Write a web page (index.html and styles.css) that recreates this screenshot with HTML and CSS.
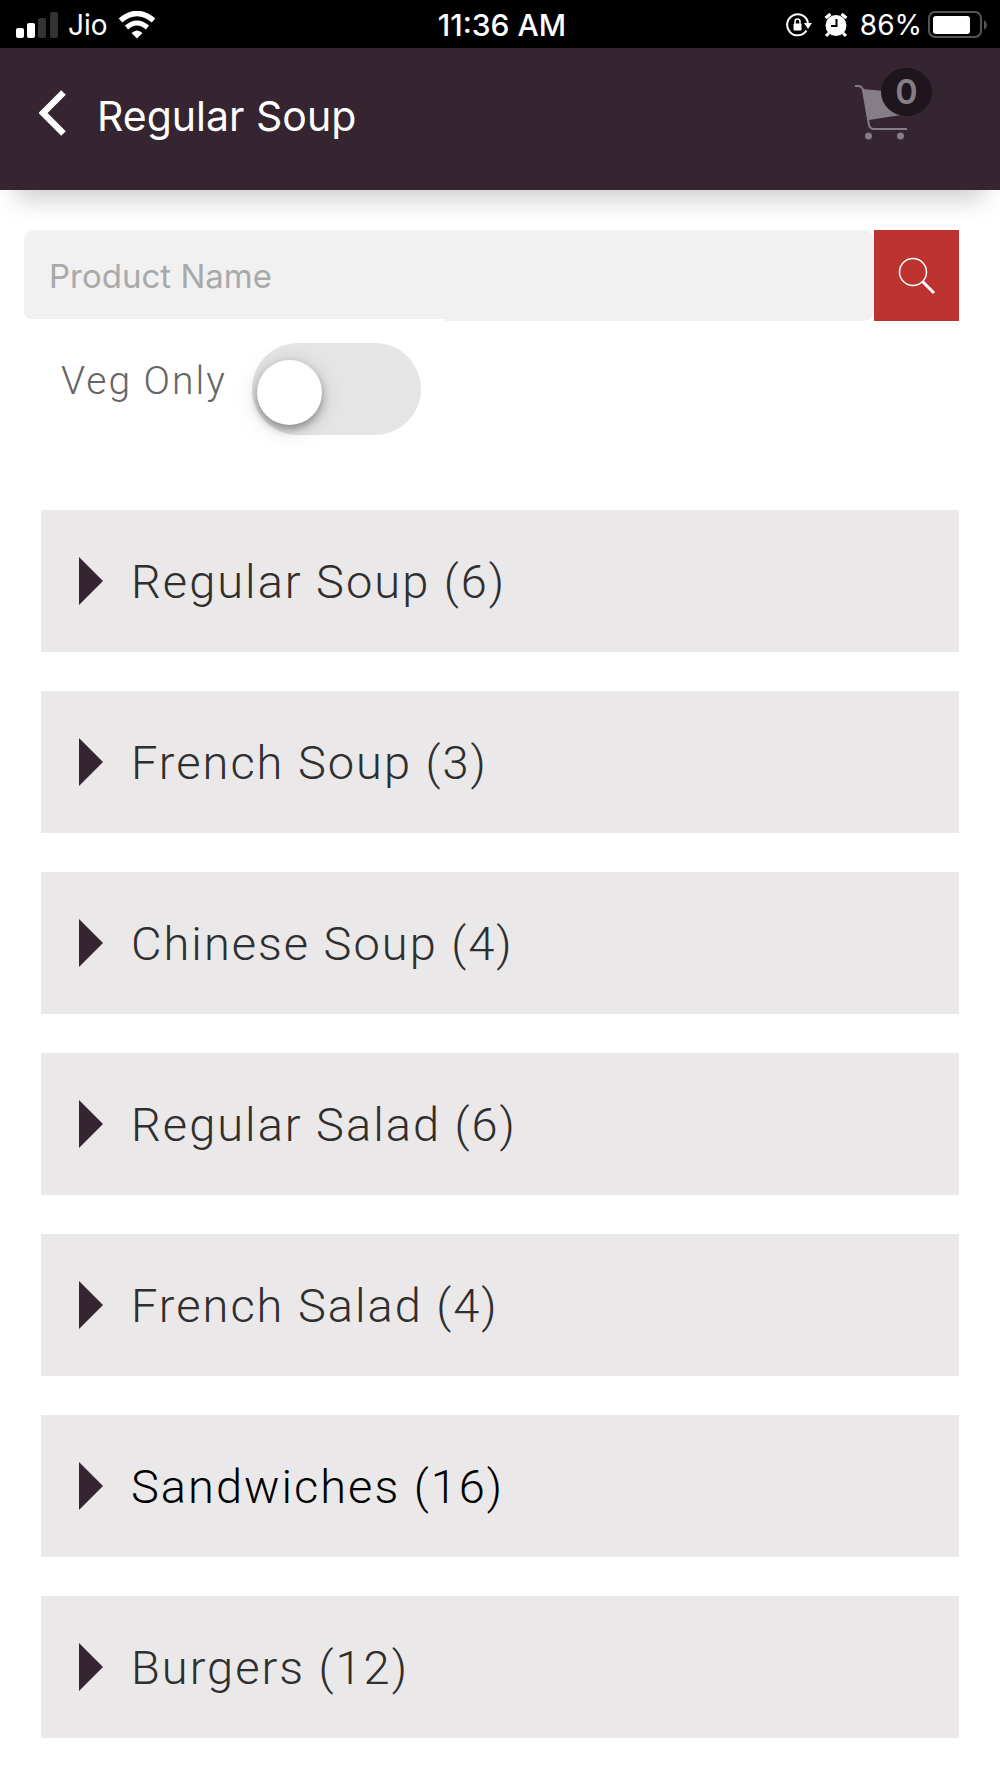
FILE: index.html
```html
<!DOCTYPE html>
<html lang="en">
<head>
<meta charset="utf-8">
<meta name="viewport" content="width=device-width, initial-scale=1">
<title>Regular Soup</title>
<link rel="stylesheet" href="styles.css">
</head>
<body>
<div class="status">
  <div class="status-side">
    <svg class="signal" width="42" height="28" viewBox="0 0 42 28" aria-hidden="true">
      <rect x="0" y="17" width="8" height="10" rx="2" fill="#fff"/>
      <rect x="11" y="12" width="8" height="15" rx="2" fill="#fff"/>
      <rect x="22" y="7" width="8" height="20" rx="2" fill="#333"/>
      <rect x="34" y="1" width="8" height="26" rx="2" fill="#333"/>
    </svg>
    <span class="carrier">Jio</span>
    <svg width="38" height="28" viewBox="0 0 38 28" aria-hidden="true">
      <path d="M2.500 9.500Q19-4.500 35.500 9.500" fill="none" stroke="#fff" stroke-width="5.500"/>
      <path d="M8.500 16.500Q19 7.500 29.500 16.500" fill="none" stroke="#fff" stroke-width="5"/>
      <path d="M13.500 22Q19 17 24.500 22L19 27.500Z" fill="#fff"/>
    </svg>
  </div>
  <span class="clock">11:36 AM</span>
  <div class="status-side status-right">
    <svg width="26" height="26" viewBox="0 0 26 26" aria-hidden="true">
      <path d="M20.500 18.500A10.500 10.500 0 1 1 22 11" fill="none" stroke="#fff" stroke-width="2"/>
      <path d="M18 11h8l-4 6z" fill="#fff"/>
      <rect x="7.500" y="11.500" width="8" height="7" rx="1" fill="#fff"/>
      <path d="M9 12V9.500a2.500 2.500 0 0 1 5 0V12" fill="none" stroke="#fff" stroke-width="1.500"/>
    </svg>
    <svg class="alarm" width="24" height="26" viewBox="0 0 24 26" aria-hidden="true">
      <path d="M1.500 6L6.500 2M17.500 2l5 4M5 21l-3 3M19 21l3 3" stroke="#fff" stroke-width="3"/>
      <circle cx="12" cy="13.500" r="10.500" fill="#fff"/>
      <path d="M12.500 7v7H7" fill="none" stroke="#000" stroke-width="2"/>
    </svg>
    <span class="percent">86%</span>
    <svg width="60" height="28" viewBox="0 0 60 28" aria-hidden="true">
      <rect x="1" y="1" width="52" height="25" rx="6" fill="none" stroke="#555" stroke-width="2"/>
      <rect x="5" y="5" width="37" height="18" rx="3" fill="#fff"/>
      <path d="M56 9q3 2 3 5t-3 5z" fill="#555"/>
    </svg>
  </div>
</div>

<header class="appbar">
  <button class="back" type="button" aria-label="Back">
    <svg width="28" height="46" viewBox="0 0 28 46"><path d="M24.500 2.500L4 23l20.500 20.500" fill="none" stroke="#fff" stroke-width="6.500"/></svg>
  </button>
  <h1 class="title">Regular Soup</h1>
  <button class="cart" type="button" aria-label="Cart">
    <svg width="54" height="56" viewBox="0 0 54 56">
      <path d="M0 2h3q4 0 5 4l6 35q1 4 5 4h33" fill="none" stroke="#867e86" stroke-width="2"/>
      <path d="M7 5l45 4-6 22-32 5z" fill="#867e86"/>
      <circle cx="13.500" cy="52" r="3.500" fill="#867e86"/>
      <circle cx="45.500" cy="52" r="3.500" fill="#867e86"/>
    </svg>
    <span class="badge">0</span>
  </button>
</header>

<main class="page">
  <form class="search">
    <input class="search-input" type="text" placeholder="Product Name" aria-label="Product Name">
    <button class="search-button" type="submit" aria-label="Search">
      <svg width="38" height="38" viewBox="0 0 38 38"><circle cx="15" cy="15" r="13.500" fill="none" stroke="#fff" stroke-width="1.500"/><path d="M24.500 24.500L36 36" stroke="#fff" stroke-width="3"/></svg>
    </button>
  </form>
  <div class="filter">
    <label class="filter-label" for="veg">Veg Only</label>
    <input class="toggle" type="checkbox" role="switch" id="veg">
  </div>
  <div class="menu">
    <details class="category"><summary class="category-head">Regular Soup (6)</summary></details>
    <details class="category"><summary class="category-head">French Soup (3)</summary></details>
    <details class="category"><summary class="category-head">Chinese Soup (4)</summary></details>
    <details class="category"><summary class="category-head">Regular Salad (6)</summary></details>
    <details class="category"><summary class="category-head">French Salad (4)</summary></details>
    <details class="category"><summary class="category-head category-active">Sandwiches (16)</summary></details>
    <details class="category"><summary class="category-head">Burgers (12)</summary></details>
  </div>
</main>
</body>
</html>
```
FILE: styles.css
```css
* {
  box-sizing: border-box;
}

body {
  margin: 0;
  background: #fff;
  font-family: Roboto, "Liberation Sans", sans-serif;
  font-weight: 300;
}

button {
  border: 0;
  padding: 0;
  background: none;
  cursor: pointer;
}

svg {
  display: block;
  flex: none;
}

/* Phone status bar */
.status {
  display: grid;
  grid-template-columns: 1fr auto 1fr;
  align-items: center;
  height: 48px;
  padding: 2px 12px 0 16px;
  background: #000;
  color: #fff;
  font-family: Inter, "Liberation Sans", sans-serif;
  font-size: 28px;
  font-weight: 400;
}

.status-side {
  display: flex;
  align-items: center;
  gap: 10px;
}

.status-right {
  gap: 12px;
  justify-content: flex-end;
}

.percent {
  margin-right: -6px;
}

.clock {
  font-size: 30px;
  font-weight: 500;
}

/* Title bar */
.appbar {
  display: flex;
  align-items: center;
  height: 142px;
  padding: 0 68px 12px 39px;
  background: #342530;
  box-shadow: 0 24px 24px -15px rgba(0, 0, 0, 0.2);
}

.title {
  flex: 1;
  margin: 5px 0 0 30px;
  color: #fff;
  font-family: Inter, "Liberation Sans", sans-serif;
  font-size: 41px;
  font-weight: 400;
}

.cart {
  position: relative;
  display: flex;
  align-items: flex-end;
  align-self: flex-start;
  width: 77px;
  height: 72px;
  margin-top: 20px;
}

.badge {
  position: absolute;
  top: 0;
  right: 0;
  width: 51px;
  height: 48px;
  border-radius: 50%;
  background: #1f161d;
  color: #867e86;
  font-family: Inter, "Liberation Sans", sans-serif;
  font-size: 34px;
  font-weight: 600;
  line-height: 48px;
  text-align: center;
}

/* Search */
.page {
  padding: 40px 41px 39px 24px;
}

.search {
  display: flex;
  height: 91px;
}

.search-input {
  flex: 1;
  min-width: 0;
  padding: 0 25px;
  border: 0;
  border-radius: 10px;
  background: #f1f1f1;
  font-family: Inter, "Liberation Sans", sans-serif;
  font-size: 33px;
}

.search-input::placeholder {
  color: #a9a9a9;
}

.search-button {
  display: grid;
  place-items: center;
  width: 85px;
  background: #bd3330;
}

/* Veg filter */
.filter {
  position: relative;
  display: flex;
  align-items: flex-start;
  justify-content: space-between;
  width: 45%;
  margin-top: -2px;
  padding: 24px 24px 0 37px;
  background: #fff;
}

.filter-label {
  color: #666;
  font-size: 39px;
  line-height: 76px;
  letter-spacing: 2px;
}

.toggle {
  appearance: none;
  display: flex;
  align-items: center;
  flex: none;
  width: 169px;
  height: 92px;
  margin: 0;
  padding: 7px 5px 0;
  border-radius: 46px;
  background: #e5e5e5;
}

.toggle::before {
  content: "";
  width: 65px;
  height: 65px;
  border-radius: 50%;
  background: #fff;
  box-shadow: 0 4px 8px rgba(0, 0, 0, 0.35), 0 4px 24px rgba(0, 0, 0, 0.15);
}

.toggle:checked {
  justify-content: flex-end;
  background: #bd3330;
}

/* Categories */
.menu {
  display: grid;
  gap: 39px;
  margin: 75px 0 0 17px;
}

.category {
  background: #eae8e9;
}

.category-head {
  display: flex;
  align-items: center;
  gap: 28px;
  height: 142px;
  padding: 0 38px;
  color: #2f2f2f;
  font-size: 47px;
  letter-spacing: 2px;
  cursor: pointer;
}

.category-head::before {
  content: "";
  width: 24px;
  height: 48px;
  background: #342530;
  clip-path: polygon(0 0, 100% 50%, 0 100%);
}

.category-active {
  color: #000;
}
```
